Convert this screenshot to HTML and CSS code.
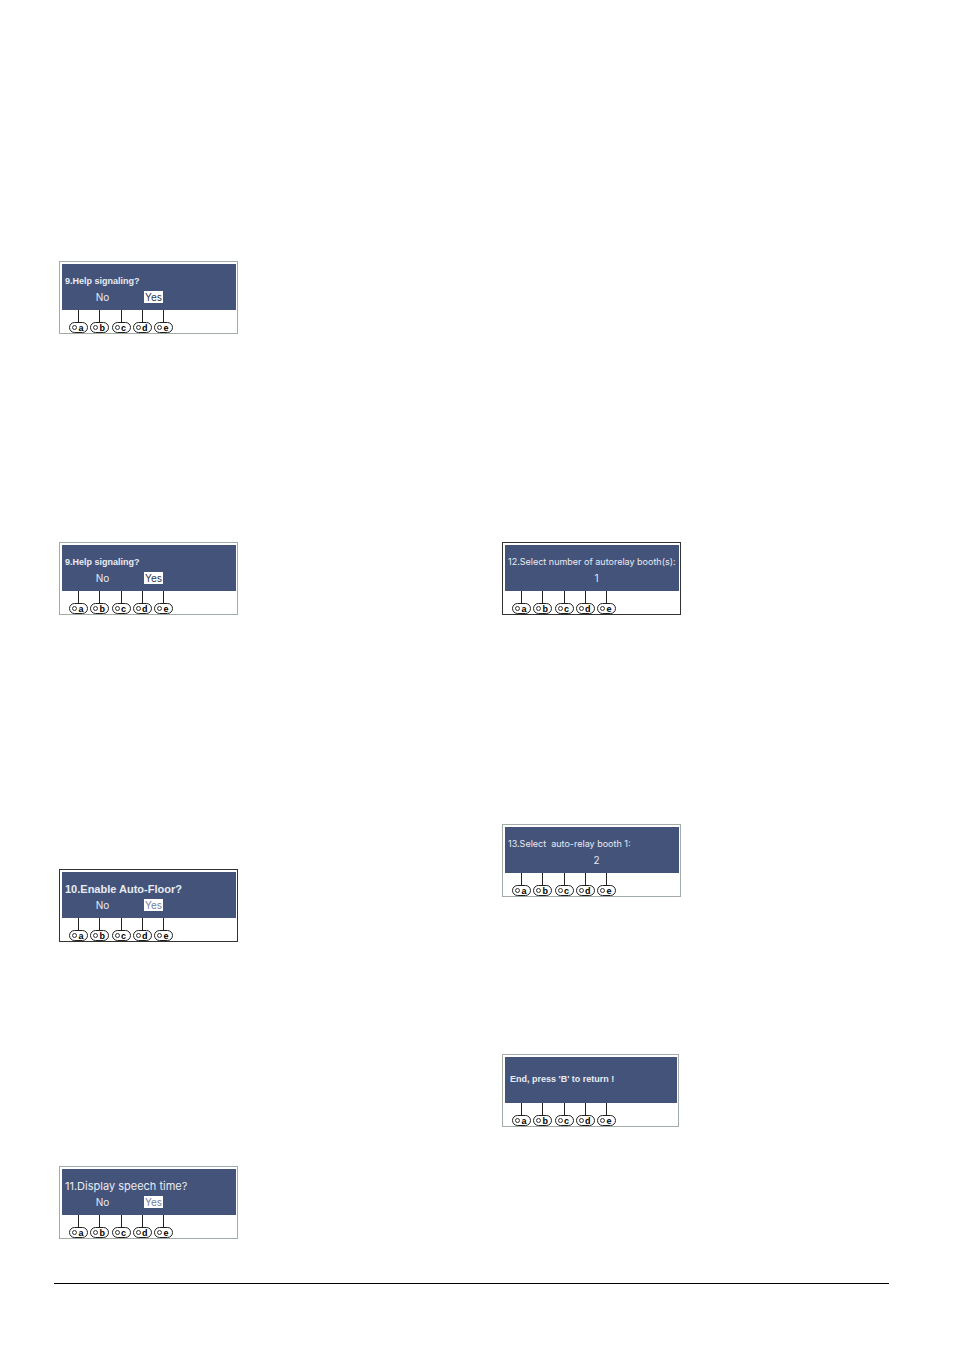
FILE: index.html
```html
<!DOCTYPE html>
<html lang="en">
    <head>
        <meta charset="UTF-8">
        <meta name="viewport" content="width=device-width, initial-scale=1.0">
        <title>Setup menu</title>
        <link rel="stylesheet" href="styles.css">
    </head>
    <body>

        <main class="page">
            <div class="columns">

                <!-- Left column -->
                <div class="column">
                    <section class="panel help-first">
                        <div class="screen">
                            <p class="prompt small">9.Help signaling?</p>
                            <div class="options"><span>No</span><span class="selected">Yes</span></div>
                        </div>
                        <div class="keys">
                            <button type="button">a</button>
                            <button type="button">b</button>
                            <button type="button">c</button>
                            <button type="button">d</button>
                            <button type="button">e</button>
                        </div>
                    </section>

                    <section class="panel help-second">
                        <div class="screen">
                            <p class="prompt small">9.Help signaling?</p>
                            <div class="options"><span>No</span><span class="selected">Yes</span></div>
                        </div>
                        <div class="keys">
                            <button type="button">a</button>
                            <button type="button">b</button>
                            <button type="button">c</button>
                            <button type="button">d</button>
                            <button type="button">e</button>
                        </div>
                    </section>

                    <section class="panel dark auto-floor">
                        <div class="screen">
                            <p class="prompt strong">10.Enable Auto-Floor?</p>
                            <div class="options"><span>No</span><span class="selected pale">Yes</span></div>
                        </div>
                        <div class="keys">
                            <button type="button">a</button>
                            <button type="button">b</button>
                            <button type="button">c</button>
                            <button type="button">d</button>
                            <button type="button">e</button>
                        </div>
                    </section>

                    <section class="panel speech-time">
                        <div class="screen">
                            <p class="prompt">11.Display speech time?</p>
                            <div class="options"><span>No</span><span class="selected pale">Yes</span></div>
                        </div>
                        <div class="keys">
                            <button type="button">a</button>
                            <button type="button">b</button>
                            <button type="button">c</button>
                            <button type="button">d</button>
                            <button type="button">e</button>
                        </div>
                    </section>
                </div>

                <!-- Right column -->
                <div class="column">
                    <section class="panel dark booth-count">
                        <div class="screen">
                            <p class="prompt narrow">12.Select number of autorelay booth(s):</p>
                            <div class="options"><span class="value">1</span></div>
                        </div>
                        <div class="keys">
                            <button type="button">a</button>
                            <button type="button">b</button>
                            <button type="button">c</button>
                            <button type="button">d</button>
                            <button type="button">e</button>
                        </div>
                    </section>

                    <section class="panel booth-select">
                        <div class="screen">
                            <p class="prompt narrow">13.Select&nbsp; auto-relay booth 1:</p>
                            <div class="options"><span class="value">2</span></div>
                        </div>
                        <div class="keys">
                            <button type="button">a</button>
                            <button type="button">b</button>
                            <button type="button">c</button>
                            <button type="button">d</button>
                            <button type="button">e</button>
                        </div>
                    </section>

                    <section class="panel end">
                        <div class="screen">
                            <p class="prompt message">End, press 'B' to return !</p>
                        </div>
                        <div class="keys">
                            <button type="button">a</button>
                            <button type="button">b</button>
                            <button type="button">c</button>
                            <button type="button">d</button>
                            <button type="button">e</button>
                        </div>
                    </section>
                </div>

            </div>
            <hr>
        </main>

    </body>
</html>
```
FILE: styles.css
```css
*, *::before, *::after {
    box-sizing: border-box;
}

body {
    margin: 0;
    background-color: #fff;
    font-family: "Liberation Sans", Arial, sans-serif;
}

.page {
    padding: 0 66px 65px 54px;
}

.columns {
    display: grid;
    grid-template-columns: 1fr 1fr;
    gap: 56px;
    padding-left: 5px;
}

.column {
    display: flex;
    flex-direction: column;
    align-items: flex-start;
}

hr {
    height: 1px;
    margin: 44px 0 0;
    border: none;
    background-color: #000;
}

/* Display panel with its five keys */
.panel {
    width: 179px;
    padding: 2px 1px 0 2px;
    border: 1px solid #a3aca6;
}

.dark {
    border-color: #333;
}

.screen {
    height: 46px;
    padding: 10px 0 0 3px;
    background-color: #445379;
    color: #e8ebf3;
}

.prompt {
    margin: 0;
    font-family: Inter, sans-serif;
    font-size: 11px;
    line-height: 14px;
    white-space: nowrap;
}

.small {
    font-family: "Liberation Sans", Arial, sans-serif;
    font-size: 9px;
    font-weight: bold;
}

.strong {
    font-family: "Liberation Sans", Arial, sans-serif;
    font-weight: bold;
}

.narrow {
    font-size: 9px;
}

.message {
    padding: 5px 0 0 2px;
    font-family: "Liberation Sans", Arial, sans-serif;
    font-size: 9px;
    font-weight: bold;
}

.options {
    display: grid;
    grid-template-columns: 51px 51px;
    justify-items: center;
    margin-top: 3px;
    padding-left: 12px;
    font-family: Inter, sans-serif;
    font-size: 10px;
    line-height: 12px;
}

.selected {
    padding: 0 1px;
    background-color: #fff;
    color: #303a55;
}

.pale {
    color: #7582a3;
}

.value {
    grid-column: 2;
}

.keys {
    display: flex;
    justify-content: space-between;
    width: 104px;
    margin-left: 7px;
    padding-top: 12px;
}

.keys button {
    position: relative;
    width: 19px;
    height: 11px;
    padding: 0 0 0 5px;
    border: 1px solid #222;
    border-radius: 6px;
    background-color: #fff;
    color: #000;
    font-family: "Liberation Sans", Arial, sans-serif;
    font-size: 9px;
    font-weight: bold;
    line-height: 8px;
    text-align: center;
}

/* Line from the screen down to the key */
.keys button::before {
    content: "";
    position: absolute;
    bottom: 9px;
    left: 8px;
    width: 1px;
    height: 13px;
    background-color: #222;
}

/* Lamp on the key */
.keys button::after {
    content: "";
    position: absolute;
    top: 2px;
    left: 2px;
    width: 5px;
    height: 5px;
    border: 1px solid #333;
    border-radius: 50%;
}

/* Space above each panel */
.help-first {
    margin-top: 261px;
}

.help-second {
    margin-top: 208px;
}

.auto-floor {
    margin-top: 254px;
}

.speech-time {
    margin-top: 224px;
}

.booth-count {
    margin-top: 542px;
}

.booth-select {
    margin-top: 209px;
}

.end {
    width: 177px;
    margin-top: 157px;
}
```
